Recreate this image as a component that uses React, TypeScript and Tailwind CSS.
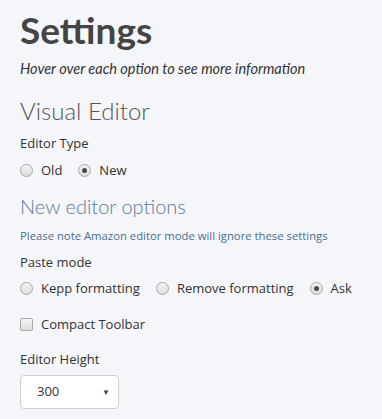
import { useState } from "react";

function Radio({ checked }: { checked?: boolean }) {
  return (
    <span className="flex h-[13px] w-[13px] shrink-0 items-center justify-center rounded-full border border-[#a9a9a9] bg-gradient-to-b from-[#f4f4f4] to-[#dcdcdc]">
      {checked && <span className="h-[5px] w-[5px] rounded-full bg-[#4a4a4a]" />}
    </span>
  );
}

function RadioOption({ label, checked }: { label: string; checked?: boolean }) {
  return (
    <label className="flex items-center gap-[8px] whitespace-nowrap">
      <Radio checked={checked} />
      <span>{label}</span>
    </label>
  );
}

export default function App() {
  const [height] = useState("300");
  return (
    <div className="min-h-screen bg-[#f5f6fa] px-[20px] pt-[6px] font-['Open_Sans',sans-serif] text-[13px] text-[#333]">
      {/* Header */}
      <h1 className="font-['Lato',sans-serif] text-[37px] font-bold leading-[48px] text-[#444]">
        Settings
      </h1>
      <p className="mt-[6px] font-['Lato',sans-serif] text-[14.5px] italic leading-[18px] text-[#333]">
        Hover over each option to see more information
      </p>

      {/* Visual Editor */}
      <h2 className="mt-[18px] font-['Lato',sans-serif] text-[24px] font-light leading-[30px] text-[#555]">
        Visual Editor
      </h2>
      <div className="mt-[8px] leading-[18px]">Editor Type</div>
      <div className="mt-[8px] flex items-center gap-[16px] leading-[20px]">
        <RadioOption label="Old" />
        <RadioOption label="New" checked />
      </div>

      {/* New editor options */}
      <h3 className="mt-[13px] font-['Lato',sans-serif] text-[20px] font-light leading-[26px] text-[#5b7a9e]">
        New editor options
      </h3>
      <p className="mt-[9px] text-[11.3px] leading-[16px] text-[#4a6d91]">
        Please note Amazon editor mode will ignore these settings
      </p>
      <div className="mt-[9px] leading-[18px]">Paste mode</div>
      <div className="mt-[7px] flex items-center gap-[16px] leading-[20px]">
        <RadioOption label="Kepp formatting" />
        <RadioOption label="Remove formatting" />
        <RadioOption label="Ask" checked />
      </div>

      <label className="mt-[16px] flex items-center gap-[8px] leading-[20px]">
        <span className="h-[13px] w-[13px] rounded-[2px] border border-[#a9a9a9] bg-gradient-to-b from-[#f4f4f4] to-[#dcdcdc]" />
        <span>Compact Toolbar</span>
      </label>

      <div className="mt-[16px] leading-[18px]">Editor Height</div>
      <div className="mt-[7px] flex h-[34px] w-[99px] items-center justify-between rounded-[4px] border border-[#d0d0d0] bg-white pl-[16px] pr-[8px]">
        <span>{height}</span>
        <span className="text-[8px] text-[#444]">▼</span>
      </div>
    </div>
  );
}
